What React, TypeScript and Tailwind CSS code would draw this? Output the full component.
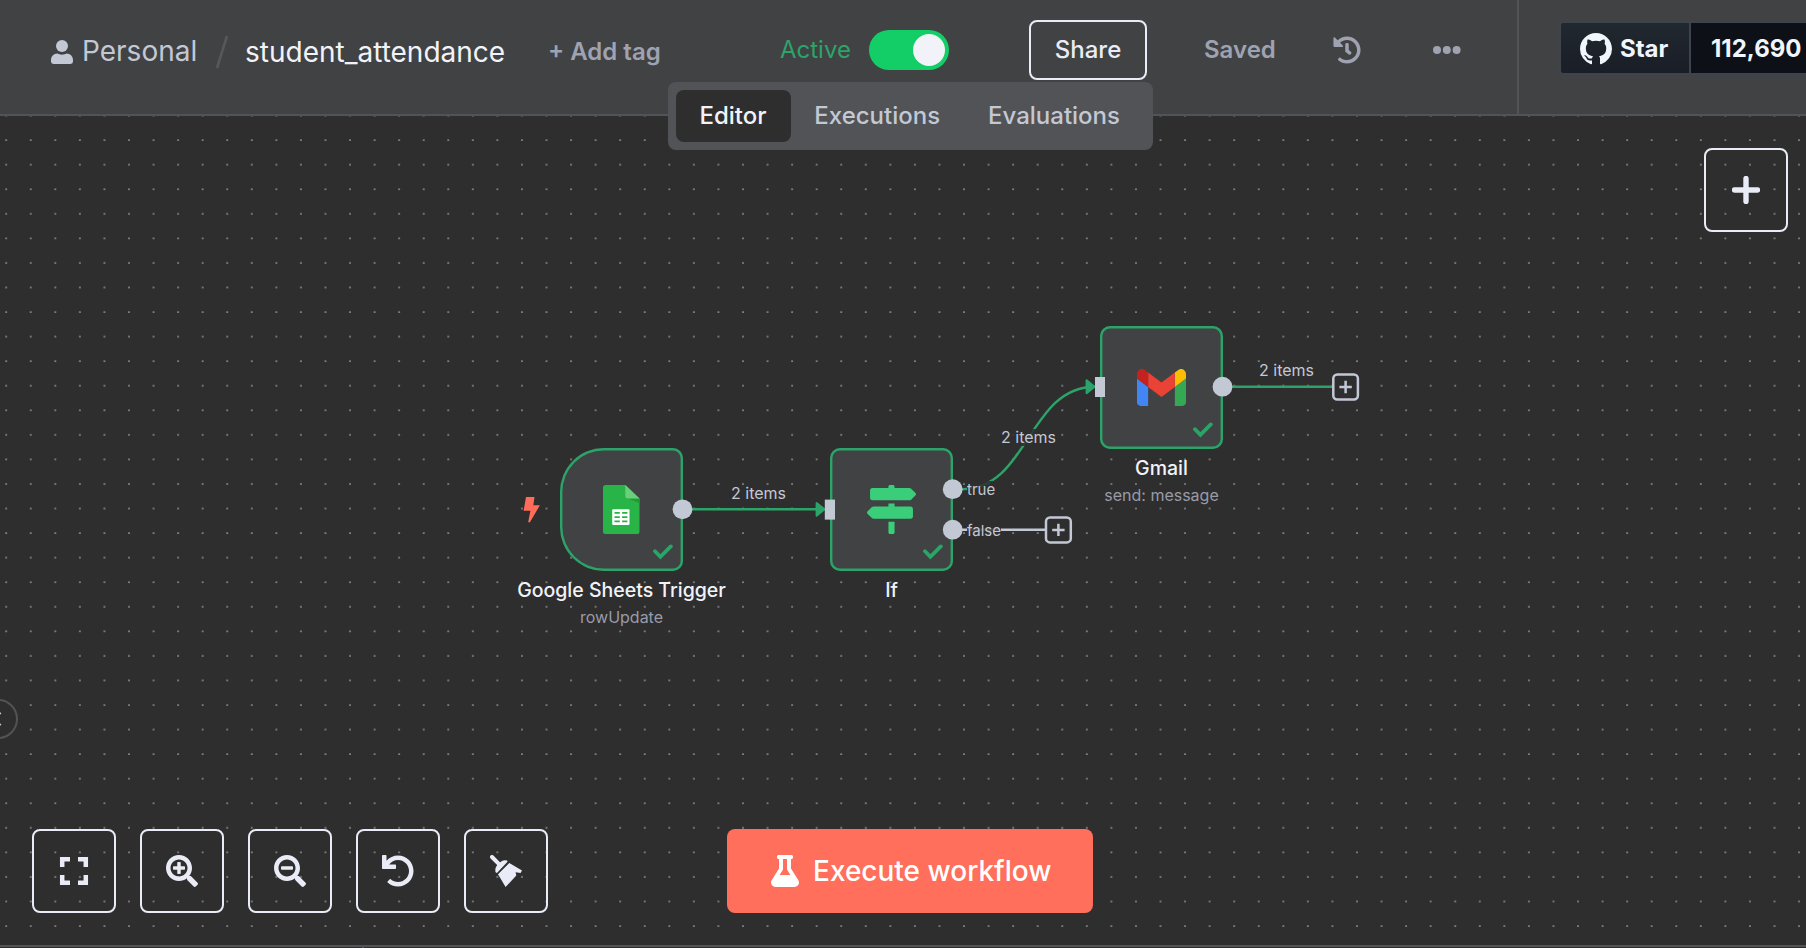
import type { ReactNode } from "react";

const FONT = "font-['Inter',sans-serif]";

function Check() {
  return (
    <svg className="absolute left-[93px] top-[96px] h-4 w-5" viewBox="0 0 20 16" fill="none">
      <path d="M2 7.2 L7.4 12.8 L17.8 2.4" stroke="#2ca469" strokeWidth="3.8" strokeLinecap="round" />
    </svg>
  );
}

function SheetsIcon() {
  return (
    <svg className="h-[49px] w-[37px]" viewBox="0 0 37 49">
      <path d="M2.6 0H22.5L36.5 13.5V46.4A2.6 2.6 0 0 1 33.9 49H2.6A2.6 2.6 0 0 1 0 46.4V2.6A2.6 2.6 0 0 1 2.6 0Z" fill="#28b446" />
      <path d="M24 13.2H36.5V18Z" fill="#219b38" />
      <path d="M22.3 0L36.5 13.4H24.9A2.6 2.6 0 0 1 22.3 10.8Z" fill="#6ace7c" />
      <rect x="9.2" y="24.3" width="17.3" height="15.6" rx="1" fill="#fff" />
      <path d="M11.5 27.9h5.3M19.1 27.9h5.3M11.5 32.1h5.3M19.1 32.1h5.3M11.5 36.4h5.3M19.1 36.4h5.3" stroke="#28b446" strokeWidth="1.7" />
    </svg>
  );
}

function SignIcon() {
  return (
    <svg className="h-[49px] w-[49px]" viewBox="0 0 512 512" fill="#3bce7a">
      <path d="M507.31 84.69L464 41.37c-6-6-14.14-9.37-22.63-9.37H288V16c0-8.840-7.160-16-16-16h-32c-8.840 0-16 7.160-16 16v16H56c-13.250 0-24 10.750-24 24v80c0 13.250 10.750 24 24 24h385.370c8.490 0 16.620-3.370 22.630-9.370l43.310-43.310c6.250-6.260 6.250-16.380 0-22.630zM224 496c0 8.840 7.160 16 16 16h32c8.840 0 16-7.160 16-16V384h-64v112zm232-272H288v-32h-64v32H70.630c-8.490 0-16.620 3.370-22.630 9.370L4.690 276.690c-6.250 6.250-6.250 16.380 0 22.630L48 342.630c6 6 14.140 9.370 22.630 9.370H456c13.250 0 24-10.750 24-24v-80c0-13.250-10.750-24-24-24z" />
    </svg>
  );
}

function GmailIcon() {
  return (
    <svg className="h-[37px] w-[49px]" viewBox="52 42 88 66">
      <path fill="#4285f4" d="M58 108h14V74L52 59v43c0 3.320 2.690 6 6 6" />
      <path fill="#34a853" d="M120 108h14c3.320 0 6-2.690 6-6V59l-20 15" />
      <path fill="#fbbc04" d="M120 48v26l20-15v-8c0-7.420-8.470-11.650-14.400-7.200" />
      <path fill="#ea4335" d="M72 74V48l24 18 24-18v26L96 92" />
      <path fill="#c5221f" d="M52 51v8l20 15V48l-5.600-4.200c-5.940-4.450-14.400-.22-14.400 7.200" />
    </svg>
  );
}

type NodeProps = { pos: string; shape: string; icon: ReactNode; title: string; subtitle?: string };

function FlowNode({ pos, shape, icon, title, subtitle }: NodeProps) {
  return (
    <div className={`absolute h-[123px] w-[123px] ${pos}`}>
      <div className={`flex h-full w-full items-center justify-center bg-[#414244] shadow-[inset_0_0_0_2.4px_#2ca469] ${shape}`}>
        {icon}
      </div>
      <Check />
      <div className="absolute left-1/2 top-[129px] flex w-[260px] -translate-x-1/2 flex-col items-center whitespace-nowrap">
        <span className="text-[19.5px] font-medium leading-[27px] text-[#f2f3f8]">{title}</span>
        {subtitle && <span className="text-[16px] leading-[27px] text-[#999ba8]">{subtitle}</span>}
      </div>
    </div>
  );
}

function Edges() {
  const c = "#c3c8d5";
  const g = "#2ca469";
  return (
    <svg className="absolute inset-0 h-full w-full" viewBox="0 116 1806 829" fill="none">
      <path d="M683 509.300H818" stroke={g} strokeWidth="2.600" />
      <path d="M962 489.200C1028.500 489.200 1028.500 386.700 1095 386.700" stroke={g} strokeWidth="2.400" />
      <path d="M1223 386.700H1333" stroke={g} strokeWidth="2.600" />
      <path d="M953 529.700H1045" stroke={c} strokeWidth="2.600" />
      <path d="M816.600 503L824.500 509.300L816.600 515.800Z" fill={g} stroke={g} strokeWidth="2" strokeLinejoin="round" />
      <path d="M1086.600 380.300L1094.500 386.700L1086.600 393.100Z" fill={g} stroke={g} strokeWidth="2" strokeLinejoin="round" />
      <path d="M526 497H534.500L533.300 505.200H539.900L529.800 522.600L528.200 522L530.400 510.800H523.600Z" fill="#ff6d5a" />
    </svg>
  );
}

function Handles() {
  const c = "#c3c8d5";
  return (
    <svg className="absolute inset-0 h-full w-full" viewBox="0 116 1806 829" fill="none">
      <g fill={c}>
        <circle cx="682.500" cy="509.300" r="9.900" />
        <circle cx="952.700" cy="489.200" r="9.900" />
        <circle cx="952.700" cy="529.700" r="9.900" />
        <circle cx="1222.500" cy="386.700" r="9.900" />
        <rect x="824.800" y="499.600" width="10.200" height="20" />
        <rect x="1095" y="377" width="10" height="20" />
      </g>
      <g stroke={c} strokeWidth="2.500">
        <rect x="1046" y="517.400" width="24.800" height="25" rx="4" fill="#2e2e2e" />
        <path d="M1058.400 523.700V536.100M1052.200 529.900H1064.600" />
        <rect x="1333.300" y="374.500" width="24.600" height="25" rx="4" fill="#2e2e2e" />
        <path d="M1345.600 380.800V393.200M1339.400 387H1351.800" />
      </g>
    </svg>
  );
}

function EdgeLabel({ pos, children }: { pos: string; children: ReactNode }) {
  return (
    <span className={`absolute whitespace-nowrap bg-[#2e2e2e]/85 leading-[17px] text-[#c3c8d5] ${pos}`}>
      {children}
    </span>
  );
}

const TOOLS = [
  <svg key="fit" className="h-8 w-8" viewBox="0 0 32 32" fill="none" stroke="currentColor" strokeWidth="4.500">
    <path d="M4.200 12V4.200H12M20 4.200H27.800V12M27.800 20V27.800H20M12 27.800H4.200V20" />
  </svg>,
  <svg key="in" className="h-8 w-8" viewBox="0 0 512 512" fill="currentColor">
    <path d="M304 192v32c0 6.600-5.400 12-12 12h-56v56c0 6.600-5.400 12-12 12h-32c-6.600 0-12-5.400-12-12v-56h-56c-6.600 0-12-5.400-12-12v-32c0-6.600 5.400-12 12-12h56v-56c0-6.600 5.400-12 12-12h32c6.600 0 12 5.400 12 12v56h56c6.600 0 12 5.400 12 12zm201 284.700L476.700 505c-9.400 9.400-24.600 9.400-33.900 0L343 405.300c-4.500-4.500-7-10.600-7-17V372c-35.300 27.600-79.700 44-128 44C93.100 416 0 322.900 0 208S93.100 0 208 0s208 93.100 208 208c0 48.300-16.400 92.700-44 128h16.300c6.400 0 12.500 2.500 17 7l99.700 99.700c9.300 9.400 9.300 24.600 0 34zM344 208c0-75.200-60.800-136-136-136S72 132.800 72 208s60.800 136 136 136 136-60.800 136-136z" />
  </svg>,
  <svg key="out" className="h-8 w-8" viewBox="0 0 512 512" fill="currentColor">
    <path d="M304 192v32c0 6.600-5.400 12-12 12H124c-6.600 0-12-5.400-12-12v-32c0-6.600 5.400-12 12-12h168c6.600 0 12 5.400 12 12zm201 284.700L476.700 505c-9.400 9.400-24.600 9.400-33.900 0L343 405.300c-4.500-4.500-7-10.600-7-17V372c-35.300 27.600-79.700 44-128 44C93.100 416 0 322.900 0 208S93.100 0 208 0s208 93.100 208 208c0 48.300-16.400 92.700-44 128h16.300c6.400 0 12.500 2.500 17 7l99.700 99.700c9.300 9.400 9.300 24.600 0 34zM344 208c0-75.200-60.800-136-136-136S72 132.800 72 208s60.800 136 136 136 136-60.800 136-136z" />
  </svg>,
  <svg key="undo" className="h-8 w-8" viewBox="0 0 512 512" fill="currentColor">
    <path d="M212.333 224.333H12c-6.627 0-12-5.373-12-12V12C0 5.373 5.373 0 12 0h48c6.627 0 12 5.373 12 12v78.112C117.773 39.279 184.260 7.470 258.175 8.007c136.906.994 246.448 111.623 246.157 248.532C504.041 393.258 393.120 504 256.333 504c-64.089 0-122.496-24.313-166.510-64.215-5.099-4.622-5.334-12.554-.467-17.420l33.967-33.967c4.474-4.474 11.662-4.717 16.401-.525C170.760 415.336 211.580 432 256.333 432c97.268 0 176-78.716 176-176 0-97.267-78.716-176-176-176-58.496 0-110.280 28.476-142.274 72.333h98.274c6.627 0 12 5.373 12 12v48c0 6.627-5.373 12-12 12z" />
  </svg>,
  <svg key="tidy" className="h-8 w-8" viewBox="0 0 32 32" fill="currentColor">
    <path d="M2 2L9.800 9.800" stroke="currentColor" strokeWidth="4" strokeLinecap="round" />
    <path d="M5.400 15.600L15.600 5.400C16.900 5 17.900 5.900 17.300 7.100L7.200 17.800C5.800 18.200 5 17 5.400 15.600ZM5.400 15.600C5 12 7.600 9.600 10 7.600C12 5.700 14 5 15.600 5.400Z" />
    <path d="M8 19.200L19.300 8L32 15.600L30.600 17.900L25.600 17.200L26.300 20.600L15.600 32Z" />
  </svg>,
];

function Header() {
  return (
    <header className="flex h-[116px] shrink-0 border-b-2 border-[#525356] bg-[#414244]">
      <div className="flex h-[104px] w-[1517px] shrink-0 items-center whitespace-nowrap pl-[51px]">
        <svg className="h-6 w-[22px]" viewBox="0 0 22 24" fill="#c3c8d5">
          <circle cx="11" cy="6" r="6" />
          <path d="M6.400 13.500C8.800 15 13.200 15 15.600 13.500C19.500 13.500 22 16.500 22 20V21.600A2.400 2.400 0 0 1 19.600 24H2.400A2.400 2.400 0 0 1 0 21.600V20C0 16.500 2.500 13.500 6.400 13.500Z" />
        </svg>
        <span className="mb-0.5 ml-[9px] w-[133px] text-[28px] leading-8 text-[#c3c8d5]">Personal</span>
        <svg className="h-9 w-[14px]" viewBox="0 0 14 36">
          <path d="M2 34L12 2" stroke="#57585b" strokeWidth="2.600" />
        </svg>
        <span className="ml-[16px] w-[303px] text-[28px] leading-8 text-[#f2f3f8]">student_attendance</span>
        <span className="w-[232px] text-[24px] font-semibold text-[#9fa2b1]">+ Add tag</span>
        <div className="mb-1 flex items-center">
          <span className="w-[89px] text-[24px] text-[#2ca469]">Active</span>
          <div className="flex h-10 w-20 items-center justify-end rounded-full bg-[#13ce66] pr-1">
            <div className="h-8 w-8 rounded-full bg-[#f2f3f8]" />
          </div>
          <button className="ml-20 h-[60px] w-[118px] rounded-lg border-2 border-[#e9ecf6] text-[24px] font-medium text-[#e9ecf6]">
            Share
          </button>
          <span className="ml-[57px] w-[129px] text-[24px] font-semibold text-[#9fa2b1]">Saved</span>
          <svg className="h-7 w-7" viewBox="0 0 512 512" fill="#9fa2b1">
            <path d="M504 255.531c.253 136.640-111.180 248.372-247.820 248.468-59.015.042-113.223-20.530-155.822-54.911-11.077-8.940-11.905-25.541-1.839-35.607l11.267-11.267c8.609-8.609 22.353-9.551 31.891-1.984C173.062 425.135 212.781 440 256 440c101.705 0 184-82.311 184-184 0-101.705-82.311-184-184-184-48.814 0-93.149 18.969-126.068 49.932l50.754 50.754c10.080 10.080 2.941 27.314-11.313 27.314H24c-8.837 0-16-7.163-16-16V38.627c0-14.254 17.234-21.393 27.314-11.314l49.372 49.372C129.209 34.136 189.552 8 256 8c136.810 0 247.747 110.780 248 247.531zm-180.912 78.784l9.823-12.630c8.138-10.463 6.253-25.542-4.210-33.679L288 256.349V152c0-13.255-10.745-24-24-24h-16c-13.255 0-24 10.745-24 24v135.651l65.409 50.874c10.463 8.137 25.541 6.253 33.679-4.210z" />
          </svg>
          <svg className="ml-[72px] h-2 w-7" viewBox="0 0 28 8" fill="#9fa2b1">
            <circle cx="4" cy="4" r="4" />
            <circle cx="13.800" cy="4" r="4" />
            <circle cx="23.600" cy="4" r="4" />
          </svg>
        </div>
      </div>
      <div className="h-full w-0.5 shrink-0 bg-[#525356]" />
      <div className="flex min-w-0 flex-1 overflow-hidden pl-[41px] pt-[21px]">
        <div className="-ml-px flex h-[54px] shrink-0 overflow-hidden rounded-l border-2 border-r-0 border-[#3d444d] text-[24px] font-bold text-[#f0f6fc]">
          <div className="flex w-[128px] items-center gap-2 bg-linear-to-b from-[#212830] to-[#1a1e26] pl-[19px] pt-px">
            <svg className="h-8 w-8" viewBox="0 0 16 16" fill="#f0f6fc">
              <path d="M8 0c4.420 0 8 3.580 8 8a8.013 8.013 0 0 1-5.450 7.590c-.4.080-.55-.17-.55-.38 0-.27.010-1.130.010-2.200 0-.75-.25-1.230-.54-1.480 1.780-.2 3.650-.88 3.650-3.950 0-.88-.31-1.590-.82-2.150.080-.2.360-1.020-.08-2.120 0 0-.67-.22-2.200.82-.64-.18-1.320-.27-2-.27-.68 0-1.360.090-2 .27-1.530-1.030-2.200-.82-2.200-.82-.44 1.100-.16 1.920-.08 2.120-.51.560-.82 1.280-.82 2.150 0 3.060 1.860 3.750 3.640 3.950-.23.200-.44.550-.51 1.070-.46.210-1.610.550-2.330-.66-.15-.24-.6-.83-1.230-.82-.67.010-.27.380.010.530.34.190.73.900.82 1.130.16.450.68 1.310 2.690.94 0 .67.010 1.300.010 1.490 0 .21-.15.450-.55.380A7.995 7.995 0 0 1 0 8c0-4.420 3.580-8 8-8Z" />
            </svg>
            Star
          </div>
          <div className="flex w-[130px] items-center border-l-2 border-[#3d444d] bg-[#0d1117] pl-[20px] pt-px">112,690</div>
        </div>
      </div>
    </header>
  );
}

export default function App() {
  return (
    <div className={`relative flex h-[948px] w-[1806px] flex-col overflow-hidden bg-[#2e2e2e] ${FONT}`}>
      <Header />

      <nav className="absolute left-[667.500px] top-[82px] z-10 flex h-[68px] w-[485px] items-center rounded-lg bg-[#525356] px-2 text-[24px] font-medium text-[#c3c8d5]">
        <span className="flex h-[52px] w-[115px] items-center justify-center rounded-lg bg-[#2e2e2e] text-[#f2f3f8]">Editor</span>
        <span className="flex w-[173.500px] justify-center">Executions</span>
        <span className="flex w-[180px] justify-center">Evaluations</span>
      </nav>

      <main className="relative flex flex-1 flex-col justify-between overflow-hidden">
        <svg className="absolute inset-0 h-full w-full">
          <defs>
            <pattern id="grid" x="5.200" y="-1.500" width="24.560" height="24.560" patternUnits="userSpaceOnUse">
              <circle cx="1" cy="1" r="0.850" fill="#a8a9ad" />
            </pattern>
          </defs>
          <rect width="100%" height="100%" fill="url(#grid)" />
        </svg>
        <Edges />
        <FlowNode pos="left-[560px] top-[332px]" shape="rounded-l-[44px] rounded-r-[10px]" icon={<SheetsIcon />} title="Google Sheets Trigger" subtitle="rowUpdate" />
        <FlowNode pos="left-[830px] top-[332px]" shape="rounded-[10px]" icon={<SignIcon />} title="If" />
        <FlowNode pos="left-[1100px] top-[209.500px]" shape="rounded-[10px]" icon={<GmailIcon />} title="Gmail" subtitle="send: message" />
        <Handles />
        <EdgeLabel pos="left-[731px] top-[369px] text-[16px]">2 items</EdgeLabel>
        <EdgeLabel pos="left-[1001px] top-[313px] text-[16px]">2 items</EdgeLabel>
        <EdgeLabel pos="left-[1259px] top-[246px] text-[16px]">2 items</EdgeLabel>
        <EdgeLabel pos="left-[967px] top-[365px] text-[15px]">true</EdgeLabel>
        <EdgeLabel pos="left-[967px] top-[406px] text-[15px]">false</EdgeLabel>

        <div className="relative flex justify-end pr-[18px] pt-8">
          <button className="flex h-[84px] w-[84px] items-center justify-center rounded-lg border-2 border-[#e9ecf6]">
            <svg className="h-7 w-7" viewBox="0 0 28 28">
              <path d="M14 2.500V25.500M2.500 14H25.500" stroke="#e9ecf6" strokeWidth="5.400" strokeLinecap="round" />
            </svg>
          </button>
        </div>

        <div className="absolute -left-[22px] top-[583px] h-10 w-10 rounded-full border-2 border-[#525356] bg-[#2e2e2e]">
          <svg className="h-full w-full" viewBox="0 0 36 36" fill="none">
            <path d="M20.500 11.500L14 18L20.500 24.500" stroke="#c3c8d5" strokeWidth="2.500" />
          </svg>
        </div>

        <div className="relative flex pb-8 pl-8">
          <div className="flex gap-6">
            {TOOLS.map((icon, i) => (
              <button key={i} className="flex h-[84px] w-[84px] items-center justify-center rounded-lg border-2 border-[#e9ecf6] text-[#e9ecf6]">
                {icon}
              </button>
            ))}
          </div>
          <button className="ml-[179px] flex h-[84px] w-[366px] items-center rounded-lg bg-[#ff6f5c] pl-11 text-[28px] font-medium text-white">
            <svg className="mr-3.5 h-8 w-7" viewBox="0 0 448 512" fill="#fff">
              <path d="M437.200 403.500L320 215V64h8c13.300 0 24-10.700 24-24V24c0-13.300-10.700-24-24-24H120c-13.300 0-24 10.700-24 24v16c0 13.300 10.700 24 24 24h8v151L10.800 403.500C-18.500 450.600 15.300 512 70.900 512h306.200c55.700 0 89.400-61.500 60.100-108.500zM137.900 320l48.200-77.600c3.700-5.200 5.800-11.600 5.800-18.400V64h64v160c0 6.900 2.200 13.200 5.800 18.400l48.200 77.600h-172z" />
            </svg>
            Execute workflow
          </button>
        </div>
      </main>

      <footer className="flex h-[3px] shrink-0 border-t-2 border-[#525356]">
        <div className="w-[364px] border-r-2 border-[#525356]" />
      </footer>
    </div>
  );
}
